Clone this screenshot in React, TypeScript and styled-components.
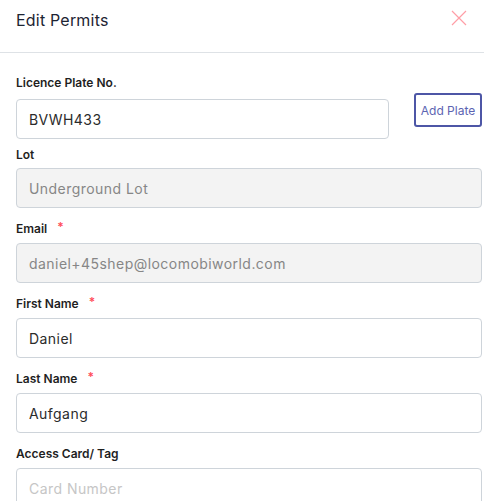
import React from "react";
import styled, { createGlobalStyle } from "styled-components";

const GlobalStyle = createGlobalStyle`
  html, body {
    margin: 0;
    padding: 0;
    background: #ffffff;
    font-family: Inter, "Noto Sans", sans-serif;
  }
  * {
    box-sizing: border-box;
  }
`;

const EditPermits = () => {
  return (
    <Modal>
      <GlobalStyle />
      <Header>
        <Title>Edit Permits</Title>
        <CloseButton aria-label="Close">
          <svg width="16" height="16" viewBox="0 0 16 16">
            <path d="M1 1L15 15M15 1L1 15" stroke="#ff9ea6" strokeWidth="1.2" />
          </svg>
        </CloseButton>
      </Header>

      <Body>
        <PlateRow>
          <PlateField>
            <Label $mb={7}>Licence Plate No.</Label>
            <Input defaultValue="BVWH433" />
          </PlateField>
          <AddButton>Add Plate</AddButton>
        </PlateRow>

        <Field $mt={7}>
          <Label $mb={4}>Lot</Label>
          <Input value="Underground Lot" disabled readOnly />
        </Field>

        <Field>
          <Label>
            Email <Required>*</Required>
          </Label>
          <Input value="daniel+45shep@locomobiworld.com" disabled readOnly />
        </Field>

        <Field>
          <Label>
            First Name <Required>*</Required>
          </Label>
          <Input defaultValue="Daniel" />
        </Field>

        <Field>
          <Label>
            Last Name <Required>*</Required>
          </Label>
          <Input defaultValue="Aufgang" />
        </Field>

        <Field>
          <Label>Access Card/ Tag</Label>
          <Input placeholder="Card Number" />
        </Field>
      </Body>
    </Modal>
  );
};

export default EditPermits;

const Modal = styled.div`
  width: 484px;
  height: 501px;
  overflow: hidden;
  background: #fff;
`;

const Header = styled.div`
  display: flex;
  align-items: flex-start;
  justify-content: space-between;
  height: 53px;
  padding: 9px 16px 0 16px;
  border-bottom: 1px solid #dee2e6;
`;

const Title = styled.h5`
  margin: 0;
  font-size: 16px;
  font-weight: 400;
  line-height: 22px;
  letter-spacing: 0.2px;
  color: #1d2433;
`;

const CloseButton = styled.button`
  display: flex;
  padding: 0;
  margin: 1px 1px 0 0;
  border: none;
  background: none;
  cursor: pointer;
`;

const Body = styled.div`
  display: flex;
  flex-direction: column;
  padding: 21px 2px 0 16px;
`;

const PlateRow = styled.div`
  display: flex;
  align-items: flex-start;
  gap: 25px;
`;

const PlateField = styled.div`
  flex: 1;
  display: flex;
  flex-direction: column;
`;

const Field = styled.div<{ $mt?: number }>`
  display: flex;
  flex-direction: column;
  margin-top: ${(p) => p.$mt ?? 12}px;
`;

const Label = styled.label<{ $mb?: number }>`
  display: block;
  margin-bottom: ${(p) => p.$mb ?? 5}px;
  font-size: 12px;
  font-weight: 600;
  line-height: 18px;
  color: #1f1f1f;
`;

const Required = styled.span`
  margin-left: 7px;
  color: #ff4d5a;
  font-size: 12px;
  vertical-align: top;
  line-height: 14px;
`;

const Input = styled.input`
  width: 100%;
  height: 40px;
  padding: 0 12px;
  border: 1px solid #ced4da;
  border-radius: 4px;
  background: #fff;
  font-family: inherit;
  font-size: 14px;
  letter-spacing: 0.45px;
  color: #2b2b2b;
  outline: none;

  &:disabled {
    background: #f3f3f3;
    color: #868686;
  }

  &::placeholder {
    color: #c6c6c6;
  }
`;

const AddButton = styled.button`
  margin-top: 19px;
  width: 68px;
  height: 34px;
  padding: 0;
  border: 2px solid #4d56a6;
  border-radius: 3px;
  background: #fff;
  font-family: inherit;
  font-size: 12px;
  color: #5c64b2;
  cursor: pointer;
`;
